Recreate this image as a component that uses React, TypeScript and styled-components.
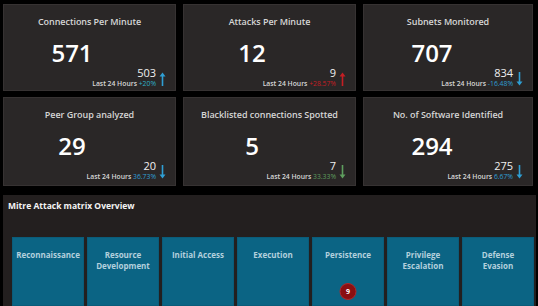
import React from "react";
import styled, { createGlobalStyle } from "styled-components";

const Global = createGlobalStyle`
  html, body { margin: 0; padding: 0; background: #000; }
  body { font-family: "Open Sans", "Liberation Sans", sans-serif; overflow: hidden; }
  #root { width: 538px; height: 306px; overflow: hidden; }
`;

const Page = styled.div`
  display: flex;
  flex-direction: column;
  padding: 4px 2px 0 3px;
  height: 306px;
  box-sizing: border-box;
`;

const CardGrid = styled.div`
  display: grid;
  grid-template-columns: 173px 173px 170px;
  grid-template-rows: 87px 89px;
  column-gap: 7px;
  row-gap: 6px;
`;

const Card = styled.div`
  background: #2a2727;
  border: 1px solid #363232;
  box-sizing: border-box;
  display: flex;
  flex-direction: column;
  padding: 11px 9px 0 0;
  color: #f2f2f2;
`;

const CardTitle = styled.div`
  font-size: 9px;
  font-weight: 600;
  line-height: 12px;
  color: #d6d6d6;
  text-align: center;
  padding-left: 9px;
  letter-spacing: -0.05px;
`;

const BigValue = styled.div`
  width: 136px;
  margin-top: 11px;
  height: 28px;
  line-height: 28px;
  font-size: 24px;
  font-weight: 600;
  text-align: center;
  color: #ffffff;
`;

const Footer = styled.div`
  display: flex;
  justify-content: flex-end;
  align-items: flex-end;
  gap: 3px;
`;

const Stats = styled.div`
  display: flex;
  flex-direction: column;
  align-items: flex-end;
`;

const PrevValue = styled.div`
  font-size: 11px;
  line-height: 12px;
  color: #f0f0f0;
`;

const Period = styled.div`
  font-size: 6.8px;
  line-height: 10px;
  font-weight: 600;
  color: #d8d8d8;
  white-space: nowrap;
`;

const Pct = styled.span<{ $color: string }>`
  color: ${(p) => p.$color};
  font-weight: 400;
`;

const ArrowBox = styled.div`
  display: flex;
  align-items: center;
  height: 16px;
  padding-bottom: 2px;
`;

const Panel = styled.div`
  margin-top: 9px;
  flex: 1;
  background: #231f1f;
  display: flex;
  flex-direction: column;
  padding: 5px 0 0 5px;
  min-height: 0;
`;

const PanelTitle = styled.div`
  font-size: 8.5px;
  font-weight: 700;
  line-height: 12px;
  color: #f4f4f4;
`;

const TileRow = styled.div`
  display: grid;
  grid-template-columns: repeat(7, 72px);
  column-gap: 3px;
  margin-top: 25px;
  padding-left: 4px;
  flex: 1;
`;

const Tile = styled.div`
  background: #0b6484;
  border: 1px solid #0a5c7a;
  box-sizing: border-box;
  display: flex;
  flex-direction: column;
  align-items: center;
  padding: 11px 4px 0;
  position: relative;
`;

const TileLabel = styled.div`
  font-size: 8px;
  font-weight: 700;
  line-height: 11px;
  color: #b3d0dd;
  text-align: center;
`;

const Badge = styled.div`
  position: absolute;
  left: 50%;
  top: 45px;
  transform: translateX(-50%);
  width: 17px;
  height: 17px;
  border-radius: 50%;
  background: #8a0f12;
  border: 1px solid #b0282b;
  box-sizing: border-box;
  color: #fff;
  font-size: 7px;
  font-weight: 700;
  display: flex;
  align-items: center;
  justify-content: center;
`;

const Arrow = ({ up, color }: { up: boolean; color: string }) => (
  <svg width="7" height="14" viewBox="0 0 7 14">
    {up ? (
      <>
        <line x1="3.5" y1="3" x2="3.5" y2="14" stroke={color} strokeWidth="1.6" />
        <path d="M0.5 4.5 L3.5 0.5 L6.5 4.5 Z" fill={color} />
      </>
    ) : (
      <>
        <line x1="3.5" y1="0" x2="3.5" y2="11" stroke={color} strokeWidth="1.6" />
        <path d="M0.5 9.5 L3.5 13.5 L6.5 9.5 Z" fill={color} />
      </>
    )}
  </svg>
);

const BLUE = "#2f9fd4";
const TEAL = "#2fb0c8";
const RED = "#c41e24";
const GREEN = "#5e9e5e";

const cards = [
  { title: "Connections Per Minute", value: "571", prev: "503", pct: "+20%", pctColor: TEAL, up: true, arrow: BLUE },
  { title: "Attacks Per Minute", value: "12", prev: "9", pct: "+28.57%", pctColor: RED, up: true, arrow: RED },
  { title: "Subnets Monitored", value: "707", prev: "834", pct: "-16.48%", pctColor: BLUE, up: false, arrow: BLUE },
  { title: "Peer Group analyzed", value: "29", prev: "20", pct: "36.73%", pctColor: BLUE, up: false, arrow: BLUE },
  { title: "Blacklisted connections Spotted", value: "5", prev: "7", pct: "33.33%", pctColor: GREEN, up: false, arrow: GREEN },
  { title: "No. of Software Identified", value: "294", prev: "275", pct: "6.67%", pctColor: BLUE, up: false, arrow: BLUE },
];

const tiles: { label: string; badge?: string }[] = [
  { label: "Reconnaissance" },
  { label: "Resource Development" },
  { label: "Initial Access" },
  { label: "Execution" },
  { label: "Persistence", badge: "9" },
  { label: "Privilege Escalation" },
  { label: "Defense Evasion" },
];

export default function App() {
  return (
    <>
      <Global />
      <Page>
        <CardGrid>
          {cards.map((c) => (
            <Card key={c.title}>
              <CardTitle>{c.title}</CardTitle>
              <BigValue>{c.value}</BigValue>
              <Footer>
                <Stats>
                  <PrevValue>{c.prev}</PrevValue>
                  <Period>
                    Last 24 Hours <Pct $color={c.pctColor}>{c.pct}</Pct>
                  </Period>
                </Stats>
                <ArrowBox>
                  <Arrow up={c.up} color={c.arrow} />
                </ArrowBox>
              </Footer>
            </Card>
          ))}
        </CardGrid>
        <Panel>
          <PanelTitle>Mitre Attack matrix Overview</PanelTitle>
          <TileRow>
            {tiles.map((t) => (
              <Tile key={t.label}>
                <TileLabel>{t.label}</TileLabel>
                {t.badge && <Badge>{t.badge}</Badge>}
              </Tile>
            ))}
          </TileRow>
        </Panel>
      </Page>
    </>
  );
}
